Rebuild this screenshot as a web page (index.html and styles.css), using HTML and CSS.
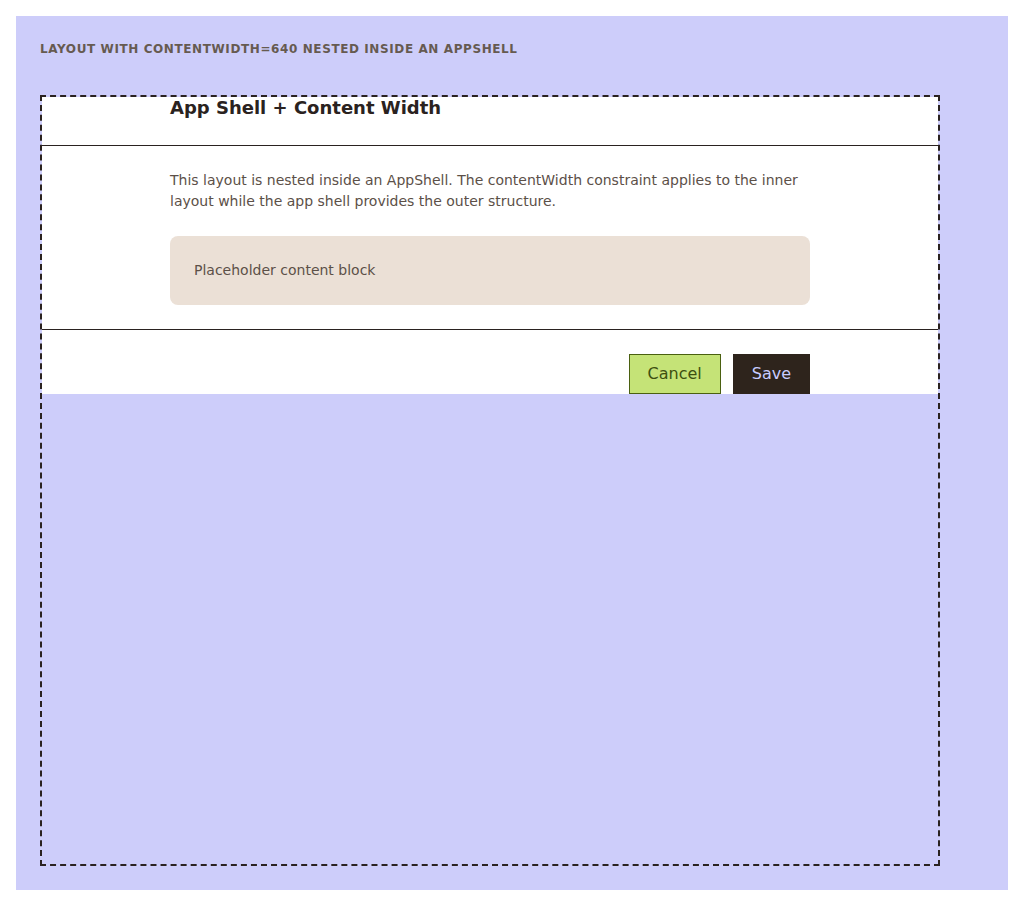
FILE: index.html
```html
<!DOCTYPE html>
<html lang="en">

<head>
    <meta charset="UTF-8">
    <meta name="viewport" content="width=device-width, initial-scale=1.0">
    <title>App Shell + Content Width</title>
    <link rel="stylesheet" href="styles.css">
</head>

<body>

    <div class="story">
        <div class="story-label">Layout with contentWidth=640 nested inside an AppShell</div>

        <!-- App shell frame -->
        <div class="app-shell">
            <header class="shell-header">
                <div class="content">
                    <h2>App Shell + Content Width</h2>
                </div>
            </header>

            <main class="shell-main">
                <div class="content">
                    <p>This layout is nested inside an AppShell. The contentWidth constraint applies to the inner layout while the app shell provides the outer structure.</p>
                    <div class="placeholder">Placeholder content block</div>
                </div>
            </main>

            <footer class="shell-footer">
                <div class="content actions">
                    <button class="btn btn-secondary" type="button">Cancel</button>
                    <button class="btn btn-primary" type="button">Save</button>
                </div>
            </footer>
        </div>
    </div>

</body>
</html>
```

FILE: styles.css
```css
body {
    font-family: 'DejaVu Sans', sans-serif;
    margin: 0;
    padding: 16px;
    background-color: #fff;
}

.story {
    background-color: #cdcdfa;
    padding: 24px;
    height: 826px;
}

.story-label {
    font-size: 12px;
    font-weight: bold;
    text-transform: uppercase;
    letter-spacing: 0.6px;
    color: #665a50;
    line-height: 18px;
    margin-bottom: 37px;
}

.app-shell {
    width: 896px;
    height: 767px;
    border: 2px dashed #2a2220;
}

/* inner column, centred inside the shell */
.content {
    width: 640px;
    margin: 0 auto;
}

.shell-header {
    background: #fff;
    height: 48px;
    border-bottom: 1px solid #2a2220;
}

h2 {
    margin: 0;
    font-size: 18px;
    line-height: 22px;
    color: #2a2220;
}

.shell-main {
    background: #fff;
    padding: 24px 0;
    border-bottom: 1px solid #2a2220;
}

.shell-main p {
    margin: 0 0 24px;
    font-size: 14px;
    line-height: 21px;
    color: #5c5048;
}

.placeholder {
    background-color: #ebe0d6;
    border-radius: 8px;
    padding: 24px;
    font-size: 14px;
    line-height: 21px;
    color: #5c5048;
}

.shell-footer {
    background: #fff;
    padding-top: 24px;
}

.actions {
    display: flex;
    justify-content: flex-end;
    gap: 12px;
}

.btn {
    height: 40px;
    padding: 0 18px 2px;
    font-family: inherit;
    font-size: 16px;
    border: 1px solid transparent;
    cursor: pointer;
}

.btn-secondary {
    background-color: #c5e377;
    border-color: #4a6010;
    color: #3d5010;
}

.btn-primary {
    background-color: #2e241c;
    border-color: #2e241c;
    color: #c8ccff;
}
```
